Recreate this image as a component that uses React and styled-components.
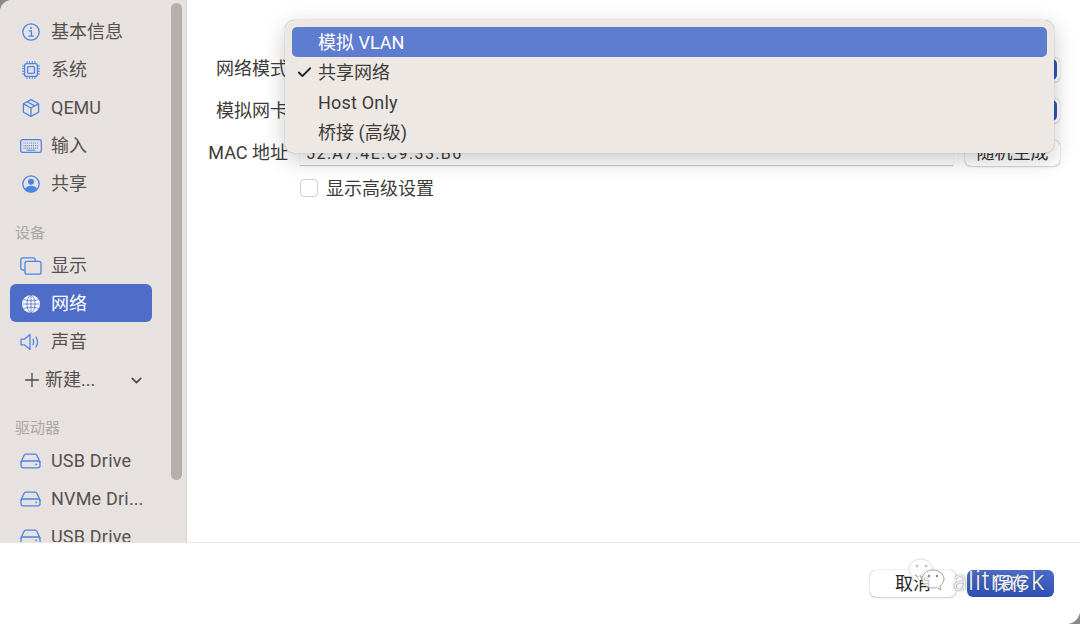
import React from 'react';
import styled, { createGlobalStyle } from 'styled-components';
import { Plus, ChevronDown, Check } from 'lucide-react';

const FONT = `Roboto, "Noto Sans CJK SC", sans-serif`;
const BLUE = '#4c84e6';

const GlobalStyle = createGlobalStyle`
  html, body {
    margin: 0;
    padding: 0;
    background: #8c8a88;
  }
  body {
    font-family: ${FONT};
    line-height: 24px;
    color: #3a3735;
  }
`;

const Window = styled.div`
  position: relative;
  width: 1080px;
  height: 624px;
  overflow: hidden;
  display: flex;
  flex-direction: column;
  background: #fff;
  border-radius: 12px 0 14px 0;
`;

const Main = styled.div`
  flex: 0 0 542px;
  display: flex;
  min-height: 0;
`;

const Sidebar = styled.aside`
  position: relative;
  flex: 0 0 187px;
  box-sizing: border-box;
  height: 542px;
  overflow: hidden;
  padding: 12px 0 0 10px;
  background: #e7e2df;
  border-right: 1px solid #d6d3d1;
`;

const Scrollbar = styled.div`
  position: absolute;
  top: 3px;
  left: 171px;
  width: 11px;
  height: 477px;
  border-radius: 6px;
  background: #b5afaa;
`;

const NavList = styled.div`
  width: 142px;
  display: flex;
  flex-direction: column;
`;

const NavRow = styled.div`
  flex: 0 0 38px;
  height: 38px;
  box-sizing: border-box;
  display: flex;
  align-items: center;
  padding: 2px 0 0 ${p => (p.$plain ? '11px' : '0')};
  border-radius: 6px;
  font-size: 18px;
  white-space: nowrap;
  letter-spacing: ${p => (p.$wide ? '0.2px' : '0')};
  color: ${p => (p.$active ? '#fff' : '#55514e')};
  background: ${p => (p.$active ? '#4e6dc9' : 'transparent')};
`;

const IconSlot = styled.span`
  flex: 0 0 41px;
  display: flex;
  justify-content: center;
  color: ${p => (p.$active ? '#fff' : BLUE)};
`;

const NewLabel = styled.span`
  margin-left: 2px;
`;

const NavChevron = styled.span`
  margin-left: auto;
  margin-right: 7px;
  display: flex;
  color: #4a4745;
`;

const SectionLabel = styled.div`
  height: ${p => p.$h}px;
  display: flex;
  align-items: flex-end;
  padding: 0 0 ${p => p.$pb}px 5px;
  box-sizing: border-box;
  font-size: 15px;
  color: #aba6a2;
`;

const Content = styled.main`
  position: relative;
  flex: 1;
  padding: 49px 20px 0 20px;
  background: #fff;
`;

const FormRow = styled.div`
  display: flex;
  align-items: center;
  height: ${p => p.$h || 42}px;
`;

const Label = styled.label`
  flex: 0 0 81px;
  text-align: right;
  font-size: 18px;
  white-space: nowrap;
  margin-right: 12px;
  color: #3d3a38;
`;

const SelectBox = styled.div`
  flex: 1;
  height: 25px;
  box-sizing: border-box;
  padding: 2px 3px 2px 0;
  border-radius: 6px;
  background: #fff;
  box-shadow: 0 0 1px rgba(0, 0, 0, 0.4), 0 1px 2px rgba(0, 0, 0, 0.12);
  display: flex;
  justify-content: flex-end;
`;

const SelectCap = styled.span`
  width: 20px;
  border-radius: 0 5px 5px 0;
  background: #2f55b8;
`;

const MacInput = styled.div`
  flex: 0 0 653px;
  box-sizing: border-box;
  height: 26px;
  padding: 2px 0 0 6px;
  font-size: 16px;
  letter-spacing: 1.5px;
  color: #3d3a38;
  border-bottom: 1px solid #c9c7c5;
  box-shadow: 0 0 1px rgba(0, 0, 0, 0.2);
`;

const SmallButton = styled.button`
  margin-left: 12px;
  width: 95px;
  height: 26px;
  padding: 0;
  border: 0;
  border-radius: 6px;
  font: 18px/24px ${FONT};
  color: #33302e;
  background: #fff;
  box-shadow: 0 0 1px rgba(0, 0, 0, 0.5), 0 1px 2px rgba(0, 0, 0, 0.15);
`;

const CheckRow = styled.div`
  display: flex;
  align-items: center;
  height: 30px;
  margin-left: 93px;
  font-size: 18px;
  color: #3d3a38;
`;

const CheckBoxMark = styled.span`
  width: 16px;
  height: 16px;
  margin: 0 8px 2px 0;
  border-radius: 4px;
  border: 1px solid #d2d0ce;
  background: #fff;
`;

const Popup = styled.div`
  position: absolute;
  top: 20px;
  left: 98px;
  width: 769px;
  height: 133px;
  box-sizing: border-box;
  padding: 7px 7px 0 7px;
  border-radius: 9px;
  background: #ede8e4;
  box-shadow: 0 0 1px rgba(0, 0, 0, 0.45), 0 6px 22px rgba(0, 0, 0, 0.22);
`;

const PopupItem = styled.div`
  position: relative;
  height: 30px;
  box-sizing: border-box;
  padding: 2px 0 0 26px;
  display: flex;
  align-items: center;
  font-size: 18px;
  border-radius: 5px;
  letter-spacing: ${p => (p.$wide ? '0.2px' : '0')};
  color: ${p => (p.$active ? '#fff' : '#3d3a38')};
  background: ${p => (p.$active ? '#5f7dd0' : 'transparent')};
`;

const CheckMark = styled.span`
  position: absolute;
  left: 4px;
  top: 7px;
  display: flex;
  color: #222;
`;

const Footer = styled.footer`
  flex: 1;
  box-sizing: border-box;
  display: flex;
  justify-content: flex-end;
  align-items: flex-start;
  gap: 11px;
  padding: 27px 26px 0 0;
  background: #fff;
  border-top: 1px solid #e8e6e4;
`;

const FooterButton = styled.button`
  width: ${p => p.$w}px;
  height: 27px;
  padding: 0;
  border: 0;
  border-radius: 6px;
  font: 18px/24px ${FONT};
  color: ${p => (p.$primary ? '#fff' : '#2b2927')};
  background: ${p => (p.$primary ? 'linear-gradient(#4a6cc8, #2c4fb6)' : '#fff')};
  box-shadow: ${p => (p.$primary ? 'none' : '0 0 1px rgba(0,0,0,0.5), 0 1px 2px rgba(0,0,0,0.15)')};
`;

const Watermark = styled.div`
  position: absolute;
  left: 908px;
  top: 558px;
  display: flex;
  align-items: center;
  pointer-events: none;
`;

const WatermarkText = styled.span`
  margin: 10px 0 0 7px;
  font-family: Inter, sans-serif;
  font-size: 26px;
  font-weight: 300;
  letter-spacing: 0.8px;
  color: rgba(255, 255, 255, 0.92);
  text-shadow: 0 0 1.5px rgba(50, 50, 50, 0.9);
`;

const Svg = ({ w = 20, h = 20, vb = '0 0 20 20', children }) => (
  <svg width={w} height={h} viewBox={vb} fill="none" stroke="currentColor" strokeWidth="1.3" strokeLinecap="round" strokeLinejoin="round">
    {children}
  </svg>
);

const InfoIcon = () => (
  <Svg>
    <circle cx="10" cy="10" r="8.2" />
    <path d="M8.2 8.8H10.4V14M7.9 14.2H12.4" />
    <circle cx="10" cy="5.9" r="1" fill="currentColor" stroke="none" />
  </Svg>
);

const ChipIcon = () => (
  <Svg>
    <rect x="3.6" y="3.6" width="12.8" height="12.8" rx="2" />
    <rect x="6.6" y="6.6" width="6.8" height="6.8" rx="0.8" />
    <path d="M6 1.4v2M8.7 1.4v2M11.3 1.4v2M14 1.4v2M6 16.6v2M8.7 16.6v2M11.3 16.6v2M14 16.6v2M1.4 6h2M1.4 8.7h2M1.4 11.3h2M1.4 14h2M16.6 6h2M16.6 8.7h2M16.6 11.3h2M16.6 14h2" strokeWidth="1" />
  </Svg>
);

const BoxIcon = () => (
  <Svg>
    <path d="M10 1.6l7.6 4.2v8.4L10 18.4l-7.6-4.2V5.8z" />
    <path d="M2.6 5.9L10 10l7.4-4.1M10 10v8.2M6.2 3.7l7.5 4.2" />
  </Svg>
);

const KeyboardIcon = () => (
  <Svg w={22} h={14} vb="0 0 22 14">
    <rect x="0.7" y="0.7" width="20.6" height="12.6" rx="1.6" />
    <path d="M3.5 4h15M3.5 6.6h15M3.5 9.2h15" strokeWidth="1.2" strokeDasharray="1 0.9" strokeLinecap="butt" />
    <path d="M7 11.2h8" strokeWidth="1" />
  </Svg>
);

const PersonIcon = () => (
  <Svg>
    <circle cx="10" cy="10" r="8.2" />
    <circle cx="10" cy="7.8" r="3" fill="currentColor" stroke="none" />
    <path d="M3.6 15c1.6-2.3 3.8-3.2 6.4-3.2s4.8.9 6.4 3.2A8.2 8.2 0 0 1 10 18.2 8.2 8.2 0 0 1 3.6 15z" fill="currentColor" stroke="none" />
  </Svg>
);

const DisplayIcon = () => (
  <Svg w={22} h={18} vb="0 0 22 18">
    <path d="M4 13H2.8A2 2 0 0 1 .8 11V2.8a2 2 0 0 1 2-2h10.4a2 2 0 0 1 2 2V4" />
    <rect x="5" y="4.4" width="16" height="12.8" rx="2" />
  </Svg>
);

const GlobeIcon = () => (
  <svg width="18" height="18" viewBox="0 0 18 18" fill="none">
    <circle cx="9" cy="9" r="9" fill="#fff" />
    <g stroke="#4e6dc9" strokeWidth="0.8">
      <ellipse cx="9" cy="9" rx="4" ry="8.6" />
      <path d="M9 .4v17.2M.6 9h16.8M2 4.6c4 1.6 10 1.6 14 0M2 13.4c4-1.6 10-1.6 14 0" />
    </g>
  </svg>
);

const SpeakerIcon = () => (
  <Svg w={21} h={18} vb="0 0 21 18">
    <path d="M1 6.2h3.4L10 1.4v15.2l-5.6-4.8H1z" />
    <path d="M13 6.2c.9 1.7.9 3.9 0 5.6M16 4c1.8 3 1.8 7 0 10" />
  </Svg>
);

const DriveIcon = () => (
  <Svg w={21} h={16} vb="0 0 21 16">
    <path d="M1 9L4 2.4A2 2 0 0 1 5.8 1.2h9.4A2 2 0 0 1 17 2.4L20 9" />
    <rect x="1" y="8" width="19" height="6.8" rx="2" />
    <circle cx="16.2" cy="11.4" r="0.9" fill="currentColor" stroke="none" />
  </Svg>
);

const WeChatMark = () => (
  <svg width="38" height="36" viewBox="0 0 38 36" fill="none">
    <path d="M25 12C24 5.5 19 1 13 1 6.4 1 1 5.6 1 11.2c0 3.2 1.7 5.9 4.4 7.8L4.4 23l4.2-2.2c1.6.5 3.3.7 5.4.6" fill="rgba(255,255,255,0.6)" stroke="#dcdcdc" />
    <circle cx="9" cy="8" r="1.4" fill="#c4c4c4" />
    <circle cx="18" cy="8" r="1.4" fill="#c4c4c4" />
    <path d="M25 12c-6 0-11 4-11 9s5 9 11 9c1.3 0 2.5-.2 3.6-.5L33 32l-1.2-4C34.4 26.4 36 23.9 36 21c0-5-5-9-11-9z" fill="rgba(255,255,255,0.75)" stroke="#a8a8a8" />
    <circle cx="21" cy="18" r="1.2" fill="#8a8a8a" />
    <circle cx="29" cy="18" r="1.2" fill="#8a8a8a" />
  </svg>
);

const topItems = [
  { icon: <InfoIcon />, text: '基本信息' },
  { icon: <ChipIcon />, text: '系统' },
  { icon: <BoxIcon />, text: 'QEMU' },
  { icon: <KeyboardIcon />, text: '输入' },
  { icon: <PersonIcon />, text: '共享' },
];

const deviceItems = [
  { icon: <DisplayIcon />, text: '显示' },
  { icon: <GlobeIcon />, text: '网络', active: true },
  { icon: <SpeakerIcon />, text: '声音' },
];

const driveItems = ['USB Drive', 'NVMe Dri...', 'USB Drive'];

const popupItems = ['模拟 VLAN', '共享网络', 'Host Only', '桥接 (高级)'];

const NavItem = ({ icon, text, active, wide }) => (
  <NavRow $active={active} $wide={wide}>
    <IconSlot $active={active}>{icon}</IconSlot>
    {text}
  </NavRow>
);

const App = () => (
  <Window>
    <GlobalStyle />
    <Main>
      <Sidebar>
        <NavList>
          {topItems.map(item => <NavItem key={item.text} {...item} />)}
          <SectionLabel $h={44} $pb={1}>设备</SectionLabel>
          {deviceItems.map(item => <NavItem key={item.text} {...item} />)}
          <NavRow $plain>
            <Plus size={22} strokeWidth={1.4} color="#4a4745" />
            <NewLabel>新建...</NewLabel>
            <NavChevron><ChevronDown size={17} strokeWidth={2.2} /></NavChevron>
          </NavRow>
          <SectionLabel $h={43} $pb={1}>驱动器</SectionLabel>
          {driveItems.map((text, i) => <NavItem key={i} icon={<DriveIcon />} text={text} wide />)}
        </NavList>
        <Scrollbar />
      </Sidebar>
      <Content>
        <FormRow $h={40}>
          <Label>网络模式</Label>
          <SelectBox><SelectCap /></SelectBox>
        </FormRow>
        <FormRow $h={43}>
          <Label>模拟网卡</Label>
          <SelectBox><SelectCap /></SelectBox>
        </FormRow>
        <FormRow $h={42}>
          <Label>MAC 地址</Label>
          <MacInput>52:A7:4E:C9:33:B6</MacInput>
          <SmallButton>随机生成</SmallButton>
        </FormRow>
        <CheckRow>
          <CheckBoxMark />
          显示高级设置
        </CheckRow>
        <Popup>
          {popupItems.map((text, i) => (
            <PopupItem key={text} $active={i === 0} $wide={i === 2}>
              {i === 1 && <CheckMark><Check size={17} strokeWidth={2.6} /></CheckMark>}
              {text}
            </PopupItem>
          ))}
        </Popup>
      </Content>
    </Main>
    <Footer>
      <FooterButton $w={86}>取消</FooterButton>
      <FooterButton $w={87} $primary>保存</FooterButton>
    </Footer>
    <Watermark>
      <WeChatMark />
      <WatermarkText>alitrack</WatermarkText>
    </Watermark>
  </Window>
);

export default App;
